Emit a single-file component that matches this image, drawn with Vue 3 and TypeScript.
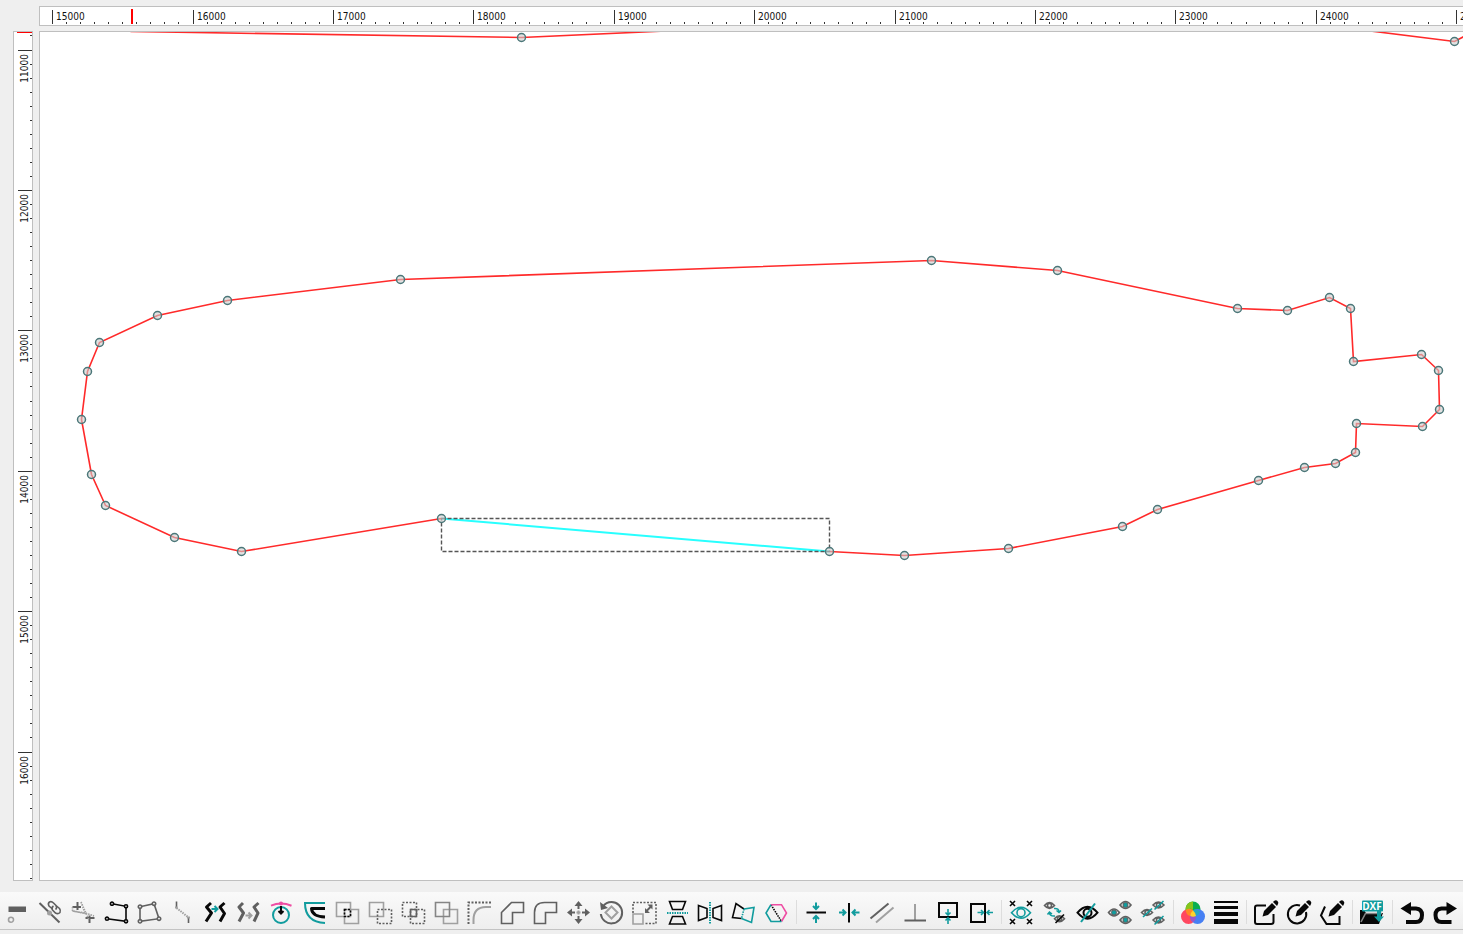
<script setup lang="ts">
type Shape = [style: string, d: string]
interface Tool {
  label: string
  shapes: Shape[]
  caption?: string
}

const STEP = 140.4
const LEFT = 52.6
const TOP = 50
const ticks = (origin: number, from: number, to: number) =>
  Array.from({ length: to - from }, (_, i) => {
    const n = from + i
    return { at: Math.floor(origin + (n * STEP) / 10) + 0.5, major: n % 10 === 0 }
  })
const columns = ticks(LEFT, 0, 160)
const rows = ticks(TOP, -1, 90)

type Point = [number, number]
const outline: Point[] = [
  [441, 518], [241, 551], [174, 537], [105, 505], [91, 474], [81, 419], [87, 371], [99, 342], [157, 315],
  [227, 300], [400, 279], [931, 260], [1057, 270], [1237, 308], [1287, 310], [1329, 297], [1350, 308],
  [1353, 361], [1421, 354], [1438, 370], [1439, 409], [1422, 426], [1356, 423], [1355, 452], [1335, 463],
  [1304, 467], [1258, 480], [1157, 509], [1122, 526], [1008, 548], [904, 555], [829, 551],
]
const upperLeft: Point[] = [[130, 31], [521, 37], [720, 28]]
const upperRight: Point[] = [[1358, 29], [1454, 41], [1490, 22]]
const nodes: Point[] = [...outline, [521, 37], [1454, 41]]
const toPoints = (list: Point[]) => list.map((p) => p.join(',')).join(' ')

const circle = (x: number, y: number, r: number, ry = r) =>
  `M${x - r} ${y}a${r} ${ry} 0 1 0 ${2 * r} 0a${r} ${ry} 0 1 0 ${-2 * r} 0z`
const box = (x: number, y: number, w: number, h: number) => `M${x} ${y}h${w}v${h}h${-w}z`
const eye = (x: number, y: number, w: number, h: number) =>
  `M${x - w} ${y}Q${x} ${y - 2 * h} ${x + w} ${y}Q${x} ${y + 2 * h} ${x - w} ${y}z`
const pencil: Shape[] = [
  ['black fill', 'M10.500 18.500L12 13L20 5L24 9L16 17z'],
  ['black fill', 'M21 4L22 3Q24 1.500 25.500 3Q27 5 26 6L25 8z'],
]
const trio: Point[] = [[19.5, 7], [8, 14.5], [19.5, 22]]

const groups: Tool[][] = [
  [
    { label: 'Remove segment', shapes: [['gray fill', box(5.5, 8.5, 17.5, 5.5)], ['light', circle(8, 21.700, 2.500)]] },
    {
      label: 'Unlink',
      shapes: [
        ['gray w2', 'M3.500 5L23.500 24.500'],
        ['light fill', circle(13.500, 15, 2.500)],
        ['gray', 'M16.500 11L13 8Q11.500 5.500 13.500 4Q15.500 3 17.500 5L20 7.500Q21.500 10 19.500 11.500'],
        ['gray', 'M17.500 8Q15 9.500 16.500 12L19.500 15Q22 16.500 24 14.500Q25 12.500 23.500 10.500L20.500 8'],
      ],
    },
    {
      label: 'Trim crossing',
      shapes: [
        ['gray w2', 'M8.500 4V12M3.500 9H12M20.500 17.500V25M16.500 20H25.500'],
        ['light dots', 'M12 4L20 22M12 4L16 15L25 18M3.500 9V13L16 15L25 18M3.500 13L18 16'],
      ],
    },
    {
      label: 'Open polyline',
      shapes: [
        ['black', 'M10 5.700L24 8.300V23.300L5 20.700'],
        ['black pale', [circle(10, 5.700, 1.600), circle(24, 8.300, 1.600), circle(24, 23.300, 1.600), circle(5, 20.700, 1.600)].join('')],
      ],
    },
    {
      label: 'Closed polyline',
      shapes: [
        ['gray', 'M5 8.700L19 5.700L24 20.700L5 23.300z'],
        ['gray pale', [circle(5, 8.700, 1.700), circle(19, 5.700, 1.700), circle(24, 20.700, 1.700), circle(5, 23.300, 1.700)].join('')],
      ],
    },
    {
      label: 'Break line',
      shapes: [
        ['gray', 'M8.500 3.500V10M20.500 19V25'],
        ['light w2', 'M7 9.500H9.500M19 19.500H22'],
        ['light w2 dots', 'M8.500 10L20 19'],
      ],
    },
    {
      label: 'Move shape along',
      shapes: [
        ['black w3', 'M10 5L5.500 9L10.500 15L5 23.500M23.500 5L19 9L23.500 15.500L19 23.500'],
        ['teal w2', 'M10.500 11H16M13.500 8L16.500 11L13.500 14'],
      ],
    },
    {
      label: 'Copy shape along',
      shapes: [
        ['gray w3', 'M9 5L5 9L9.500 15L5 23.500M24.500 5L20 9L24 15L20 23.500'],
        ['light w2', 'M11.500 17.500H17M14.500 14.500L17.500 17.500L14.500 20.500'],
      ],
    },
    {
      label: 'Tangent circle',
      shapes: [
        ['teal w2', circle(14, 17, 8)],
        ['pink w2', 'M4 7.700Q14 3.500 24.500 7.700'],
        ['pink fill', circle(14, 5.500, 2)],
        ['black w2', 'M14 8V15M11.500 13L14 15.500L16.500 13'],
      ],
    },
    { label: 'Offset', shapes: [['teal w2', 'M25 5H5Q5 24 25 25'], ['black w3', 'M25 10.500H11.500Q12 18.500 25 19']] },
    {
      label: 'Intersect',
      shapes: [['light', box(3.5, 4.5, 14, 14)], ['light', box(11.5, 11.5, 14, 14)], ['black dash', box(11.5, 11.5, 6, 7)]],
    },
    { label: 'Subtract', shapes: [['light', box(3.5, 4.5, 14, 14)], ['gray dash', box(11.5, 11.5, 14, 14)]] },
    {
      label: 'Keep overlap',
      shapes: [['gray dash', box(3.5, 4.5, 14, 14)], ['gray dash', box(11.5, 11.5, 14, 14)], ['gray', box(11.5, 11.5, 6, 7)]],
    },
    { label: 'Unite', shapes: [['light', box(11.5, 11.5, 14, 14)], ['mid', box(3.5, 4.5, 14, 14)]] },
    { label: 'Round corner', shapes: [['gray dash w2', 'M3.500 26V4.500H26'], ['light w2', 'M8.500 26V22Q8.500 9 21 9H26']] },
    { label: 'Chamfer', shapes: [['gray', 'M3.500 25.500V14.500L13.500 4.500H25.500V14.500H14.500V25.500z']] },
    { label: 'Fillet', shapes: [['gray', 'M3.500 25.500V14.500Q3.500 4.500 13.500 4.500H25.500V14.500H14.500V25.500z']] },
    {
      label: 'Move',
      shapes: [
        ['gray w2', 'M14.500 5V11M14.500 18V24M5 14.500H11M18 14.500H24'],
        ['light w2', 'M12.500 14.500H16.500M14.500 12.500V16.500'],
        ['gray fill', 'M10.500 8L14.500 3L18.500 8zM10.500 21L14.500 26L18.500 21zM8 10.500L3 14.500L8 18.500zM21 10.500L26 14.500L21 18.500z'],
      ],
    },
    {
      label: 'Rotate',
      shapes: [
        ['gray w2', 'M6 8.500Q9 4 14.500 4A10.700 10.700 0 1 1 3.800 16'],
        ['gray fill', 'M3 4L4 12L11 10z'],
        ['light w2', 'M14.500 8.500L20.500 14.500L14.500 20.500L8.500 14.500z'],
      ],
    },
    {
      label: 'Scale',
      shapes: [
        ['gray dash', 'M3 15V4.500H26V25.500H14'],
        ['light', box(3, 16, 10, 10)],
        ['gray w2', 'M16.500 13L21 8.500'],
        ['gray fill', 'M15 10V15H20zM17.500 6.500H22.500V11.500z'],
      ],
    },
    {
      label: 'Flip vertically',
      shapes: [
        ['black', 'M6.500 3.500H22.500L19.500 11.500H9.500zM9.500 18.500H19.500L22.500 26H6.500z'],
        ['teal w2 dots', 'M4 15H25'],
      ],
    },
    {
      label: 'Flip horizontally',
      shapes: [
        ['black', 'M2.500 7.500L11 10.500V19.500L2.500 22.500zM25.500 7.500L17 10.500V19.500L25.500 22.500z'],
        ['teal w2 dots', 'M14 4V26'],
      ],
    },
    {
      label: 'Mirror by line',
      shapes: [
        ['black', 'M12.500 20.500L3.500 19.500L7 5.500L15 11'],
        ['teal', 'M15 11L25 9.500L22.500 24.500L12.500 20.500'],
        ['teal dots', 'M15 11L12.500 20.500'],
      ],
    },
    {
      label: 'Split polygon',
      shapes: [
        ['black dots', 'M9 6.700L19.500 23.500'],
        ['pink', 'M9 6.700H19.500L24.500 15L19.500 23.500'],
        ['teal', 'M9 6.700L4 15L9 23.500H19.500'],
      ],
    },
  ],
  [
    {
      label: 'Align to horizontal',
      shapes: [['black w2', 'M4.500 14.500H24'], ['teal w2', 'M14 4.500V10M11 8L14 11L17 8M14 25V19M11 21L14 18L17 21']],
    },
    {
      label: 'Align to vertical',
      shapes: [['black w2', 'M14 5V24.500'], ['teal w2', 'M4 14.500H10M7.500 11.500L10.500 14.500L7.500 17.500M24.500 14.500H18M20.500 11.500L17.500 14.500L20.500 17.500']],
    },
    { label: 'Parallel', shapes: [['gray w2', 'M2.500 20.500L20.500 5.500'], ['light w2', 'M8 24.500L25.500 9.500']] },
    { label: 'Perpendicular', shapes: [['light w2', 'M14 6V22'], ['gray w2', 'M3.500 22.500H25']] },
    {
      label: 'Snap below',
      shapes: [['black w2', box(5, 5, 18, 14)], ['teal', 'M14 11V17M11.500 14.500L14 17L16.500 14.500M14 26V20M11.500 22.500L14 20L16.500 22.500']],
    },
    {
      label: 'Snap right',
      shapes: [['black w2', box(4, 6, 14, 18)], ['teal', 'M10.500 14.500H16.500M14 12L16.500 14.500L14 17M26 14.500H20M22.500 12L20 14.500L22.500 17']],
    },
  ],
  [
    {
      label: 'Show extents',
      shapes: [
        ['teal', eye(14, 14.700, 9.500, 5.500) + circle(14, 14.700, 4)],
        ['black', [[5.5, 5.5], [22.5, 5.5], [5.5, 23.5], [22.5, 23.5]].map(([x, y]) => `M${x - 2.5} ${y - 2.5}l5 5m0 -5l-5 5`).join('')],
      ],
    },
    {
      label: 'Swap visibility',
      shapes: [
        ['gray', eye(9.500, 7.500, 5, 3) + circle(9.500, 7.500, 2)],
        ['gray', eye(19.500, 20.700, 5, 3) + circle(19.500, 20.700, 2)],
        ['black', 'M15.500 25L24 16.500'],
        ['teal', 'M14 10.500Q19 10 19 14M16.500 12.500L19 14.500L21 12.500M15 18Q10 18.500 9.500 15M7.500 16.500L9.500 14L12 16'],
      ],
    },
    { label: 'Hide', shapes: [['black w2', eye(14.500, 14.700, 10, 6) + circle(14.500, 14.700, 4)], ['teal w2', 'M8 24L22 5.500']] },
    {
      label: 'Show all',
      shapes: trio.flatMap(([x, y]): Shape[] => [['gray', eye(x, y, 5.5, 3.5)], ['teal fill', circle(x, y, 2.5)], ['gray thin', circle(x, y, 2.5)]]),
    },
    {
      label: 'Hide all',
      shapes: trio.flatMap(([x, y]): Shape[] => [['gray', eye(x, y, 5.5, 3) + circle(x, y, 2)], ['teal', `M${x - 4} ${y + 4.5}L${x + 5} ${y - 4}`]]),
    },
  ],
  [
    {
      label: 'Colours',
      shapes: [
        ['green fill', circle(14, 11, 7.500)],
        ['red fill', circle(9.500, 18.500, 7.500)],
        ['blue fill', circle(18.500, 18.500, 7.500)],
        ['lime fill', 'M14 3.500A7.500 7.500 0 0 0 6.700 12.500Q13 9 14 12.500z'],
        ['orange fill', 'M6.700 12Q11 9.500 14.500 12.500L11 18Q7 17 6.700 12z'],
        ['violet fill', 'M14 24.500Q10.500 21 11.200 17L17 19Q17 22 14 24.500z'],
        ['cyan fill', 'M21 13.500Q20 18 15 18.500L14 12.500Q17.500 10 21 13.500z'],
        ['yellow fill', 'M14 12.500Q16.500 14.500 17 18Q14 19.500 11.200 18Q11.500 14.500 14 12.500z'],
      ],
    },
    { label: 'Line width', shapes: [['black fill', box(2, 3, 24, 2) + box(2, 8, 24, 3) + box(2, 14, 24, 4) + box(2, 21, 24, 5)]] },
  ],
  [
    { label: 'Edit rectangle', shapes: [['black w2', 'M14 7.500H5Q3 7.500 3 9.500V24Q3 26 5 26H19Q21.500 26 21.500 24V16'], ...pencil] },
    { label: 'Edit circle', shapes: [['black w2', 'M15 7.500A9.200 9.200 0 1 0 21 14'], ...pencil] },
    { label: 'Edit polyline', shapes: [['black w2', 'M7 8.500L3 17.500L8.500 26H21.500V18'], ...pencil] },
  ],
  [
    {
      label: 'Export DXF',
      caption: 'DXF',
      shapes: [
        ['black fill', 'M2 12H6L8 15H25L21 26H2z'],
        ['mid', 'M3 24L7.500 15.500H24'],
        ['teal fill', 'M5 2.500H24Q25 2.500 25 3.500V12.500Q25 13.500 24 13.500H5Q4 13.500 4 12.500V3.500Q4 2.500 5 2.500z'],
        ['teal fill', 'M19 13H23V18.500H26L21 24L16 18.500H19z'],
      ],
    },
  ],
  [
    { label: 'Undo', shapes: [['black fill', 'M2.500 10.500L13 4V17z'], ['black w4', 'M12 10.500H18Q24 11 24 17Q24 24 18 24H8']] },
    { label: 'Redo', shapes: [['black fill', 'M26 10.500L15.500 4V17z'], ['black w4', 'M16.500 10.500H10.500Q4.500 11 4.500 17Q4.500 24 10.500 24H20.500']] },
  ],
]
</script>

<template>
  <div class="editor">
    <main class="workspace">
      <div class="ruler across">
        <svg class="surface" aria-label="Horizontal ruler">
          <g transform="translate(-40 -7)">
            <line
              v-for="t in columns"
              :key="t.at"
              class="tick"
              :x1="t.at"
              :x2="t.at"
              :y1="t.major ? 10 : 22"
              y2="24"
            />
            <text v-for="i in 11" :key="i" class="number" :x="Math.floor(LEFT + (i - 1) * STEP) + 4" y="20">{{ 14000 + i * 1000 }}</text>
            <line class="cursor" x1="132" x2="132" y1="9" y2="24" />
          </g>
        </svg>
      </div>
      <div class="ruler down">
        <svg class="surface" aria-label="Vertical ruler">
          <g transform="translate(-14 -32)">
            <line
              v-for="t in rows"
              :key="t.at"
              class="tick"
              :x1="t.major ? 18 : 30"
              x2="32"
              :y1="t.at"
              :y2="t.at"
            />
            <text
              v-for="i in 6"
              :key="i"
              class="number"
              text-anchor="end"
              :transform="`translate(28 ${Math.floor(TOP + (i - 1) * STEP) + 4}) rotate(-90)`"
            >{{ 10000 + i * 1000 }}</text>
            <line class="cursor thin" x1="17" x2="32" y1="32.5" y2="32.5" />
          </g>
        </svg>
      </div>
      <div class="canvas">
        <svg class="surface" aria-label="Drawing">
          <g transform="translate(-39.5 -31.5)">
            <polyline class="path" :points="toPoints(upperLeft)" />
            <polyline class="path" :points="toPoints(upperRight)" />
            <polyline class="path" :points="toPoints(outline)" />
            <line class="picked" x1="441" y1="518" x2="829" y2="551" />
            <rect class="bounds" x="441" y="518" width="388" height="33" />
            <circle v-for="(p, i) in nodes" :key="i" class="node" :cx="p[0]" :cy="p[1]" r="4" />
          </g>
        </svg>
      </div>
    </main>
    <div class="toolbar" role="toolbar" aria-label="Drawing tools">
      <div v-for="(group, g) in groups" :key="g" class="group">
        <button v-for="tool in group" :key="tool.label" type="button" class="tool" :aria-label="tool.label">
          <svg class="icon" viewBox="0 0 28 28" aria-hidden="true">
            <path v-for="(s, i) in tool.shapes" :key="i" :class="s[0]" :d="s[1]" />
            <text v-if="tool.caption" class="caption" x="14" y="12" text-anchor="middle">{{ tool.caption }}</text>
          </svg>
        </button>
      </div>
    </div>
  </div>
</template>

<style>
body {
  margin: 0;
  background: #efefef;
}
</style>

<style scoped>
.editor {
  display: flex;
  flex-direction: column;
  height: 100vh;
  overflow: hidden;
  background: #efefef;
  font-family: "DejaVu Sans Condensed", "DejaVu Sans", sans-serif;
}
.workspace {
  flex: 1;
  min-height: 0;
  display: grid;
  grid-template: 20px minmax(0, 1fr) / 20px minmax(0, 1fr);
  gap: 5px 6px;
  padding: 6px 0 11px 13px;
}
.ruler,
.canvas {
  border: 1px solid #bfbfbf;
  background: #fff;
  overflow: hidden;
}
.across {
  grid-column: 2;
  border-right: 0;
}
.canvas {
  border-right: 0;
}
.surface {
  display: block;
  width: 100%;
  height: 100%;
}
.tick {
  stroke: #333;
  stroke-width: 1;
}
.number {
  font-size: 10px;
  fill: #111;
}
.cursor {
  stroke: #f00;
  stroke-width: 2;
}
.cursor.thin {
  stroke-width: 1;
}
.path {
  fill: none;
  stroke: #ff2a2a;
  stroke-width: 1.6;
}
.picked {
  stroke: #28ffff;
  stroke-width: 2;
}
.bounds {
  fill: none;
  stroke: #555;
  stroke-width: 1.4;
  stroke-dasharray: 4 2;
}
.node {
  fill: rgba(205, 205, 205, 0.6);
  stroke: #4b7779;
  stroke-width: 1.5;
}
.toolbar {
  display: flex;
  flex: none;
  box-sizing: border-box;
  height: 38px;
  margin-bottom: 4px;
  padding-top: 3px;
  border-bottom: 1px solid #c3c3c3;
  background: linear-gradient(#fafafa, #eee);
}
.group {
  display: flex;
  align-items: center;
}
.group + .group::before {
  content: "";
  width: 1px;
  height: 24px;
  margin: 0 2px 0 4px;
  background: #ddd;
}
.tool {
  display: flex;
  justify-content: center;
  align-items: center;
  width: 33px;
  height: 32px;
  padding: 0;
  border: 0;
  background: none;
}
.icon {
  width: 28px;
  height: 28px;
}
.icon path {
  fill: none;
  stroke: var(--ink);
  stroke-width: 1.6;
}
.icon .thin { stroke-width: 1; }
.icon .w2 { stroke-width: 2; }
.icon .w3 {
  stroke-width: 3;
  stroke-linejoin: round;
}
.icon .w4 { stroke-width: 4; }
.icon .dots { stroke-dasharray: 1.5 1; }
.icon .dash { stroke-dasharray: 2 1.5; }
.icon .pale { fill: #f4f4f4; }
.icon .fill {
  fill: var(--ink);
  stroke: none;
}
.black { --ink: #080808; }
.gray { --ink: #606060; }
.mid { --ink: #858585; }
.light { --ink: #a0a0a0; }
.teal { --ink: #119c9e; }
.pink { --ink: #ee4da3; }
.green { --ink: #08af50; }
.lime { --ink: #87c51c; }
.red { --ink: #ff4860; }
.blue { --ink: #467ff3; }
.orange { --ink: #ff8a24; }
.violet { --ink: #9a55c8; }
.cyan { --ink: #26a6c4; }
.yellow { --ink: #ffd42a; }
.caption {
  fill: #fff;
  font: bold 10px "Open Sans", sans-serif;
}
</style>
